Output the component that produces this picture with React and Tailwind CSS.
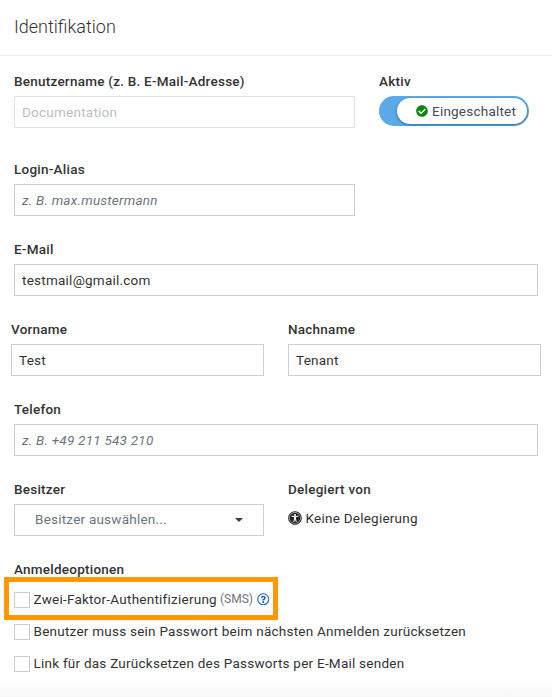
import { FaCheckCircle, FaRegQuestionCircle, FaUniversalAccess } from "react-icons/fa";

function Label({ children }) {
  return <div className="h-[25px] font-medium leading-5 whitespace-nowrap text-[#333]">{children}</div>;
}

function Field({ label, className = "", inputClassName = "", ...props }) {
  return (
    <label className={`block ${className}`}>
      <Label>{label}</Label>
      <input
        className={`block h-8 w-full border bg-white px-[7px] tracking-[0.24px] text-[#333] outline-none placeholder:italic placeholder:text-[#6c757d] placeholder:opacity-100 ${
          inputClassName || "border-[#c9cfd4]"
        }`}
        {...props}
      />
    </label>
  );
}

function Option({ children }) {
  return (
    <label className="flex h-8 items-center gap-[3.5px]">
      <input type="checkbox" className="size-4 shrink-0 appearance-none border border-[#c9cfd4] bg-white" />
      <span className="-mt-0.5 flex items-center whitespace-nowrap leading-5">{children}</span>
    </label>
  );
}

export default function App() {
  return (
    <div className="flex h-[697px] w-[552px] flex-col overflow-hidden bg-white font-['Roboto',sans-serif] text-[13.5px] tracking-[0.24px] text-[#333]">
      <header className="flex h-14 shrink-0 items-center border-b border-[#eceef0] px-[14px]">
        <h1 className="-mt-0.5 text-[18px] font-light leading-6 tracking-normal text-[#333]">Identifikation</h1>
      </header>
      <main className="flex-1 px-[14px] pt-[15px]">
        <div className="flex gap-6">
          <Field
            label="Benutzername (z. B. E-Mail-Adresse)"
            className="w-[341px]"
            inputClassName="border-[#dfe3e7] text-[#b9bfc5]!"
            defaultValue="Documentation"
          />
          <div>
            <Label>Aktiv</Label>
            <button className="flex h-[30px] w-[150px] justify-end rounded-full bg-[#5aaaea] p-0.5 tracking-[0.22px]">
              <span className="flex h-[26px] w-[130px] items-center rounded-full bg-white pl-[19px] text-[#3f4b59] shadow-[0_1px_3px_rgba(0,0,0,0.4)]">
                <FaCheckCircle className="mr-1 size-3 text-[#0a870a]" />
                Eingeschaltet
              </span>
            </button>
          </div>
        </div>
        <Field label="Login-Alias" className="mt-[31px] w-[341px]" placeholder="z. B. max.mustermann" />
        <Field label="E-Mail" className="mt-[23px]" defaultValue="testmail@gmail.com" />
        <div className="-mx-[3px] mt-[23px] flex gap-6">
          <Field label="Vorname" className="w-[253px]" defaultValue="Test" />
          <Field label="Nachname" className="w-[253px]" defaultValue="Tenant" />
        </div>
        <Field label="Telefon" className="mt-[23px]" placeholder="z. B. +49 211 543 210" />
        <div className="mt-[23px] flex gap-6">
          <div className="w-[250px]">
            <Label>Besitzer</Label>
            <button className="flex h-8 w-full items-center justify-between border border-[#c9cfd4] pr-5 pl-5 tracking-[0.22px] text-[#6c757d]">
              <span className="-mt-0.5">Besitzer auswählen...</span>
              <span className="border-x-4 border-t-4 border-x-transparent border-t-[#34404d]" />
            </button>
          </div>
          <div>
            <Label>Delegiert von</Label>
            <div className="flex h-7 items-center gap-[3.5px]">
              <FaUniversalAccess className="size-[14px] text-[#222]" />
              Keine Delegierung
            </div>
          </div>
        </div>
        <section className="mt-[23px]">
          <div className="h-[25px] font-medium leading-5">Anmeldeoptionen</div>
          <div className="relative">
            <Option>
              Zwei-Faktor-Authentifizierung
              <span className="ml-[3px] text-[12px] tracking-normal text-[#6c757d]">(SMS)</span>
              <FaRegQuestionCircle className="ml-1 size-[12.5px] text-[#1c68c4]" />
            </Option>
            <div className="pointer-events-none absolute -top-[7px] -left-[10px] h-[43px] w-[274px] border-5 border-[#ff9800]" />
          </div>
          <Option>Benutzer muss sein Passwort beim nächsten Anmelden zurücksetzen</Option>
          <Option>Link für das Zurücksetzen des Passworts per E-Mail senden</Option>
        </section>
      </main>
      <div className="h-4 shrink-0 bg-linear-to-b from-white to-[#f8f8f8]" />
    </div>
  );
}
